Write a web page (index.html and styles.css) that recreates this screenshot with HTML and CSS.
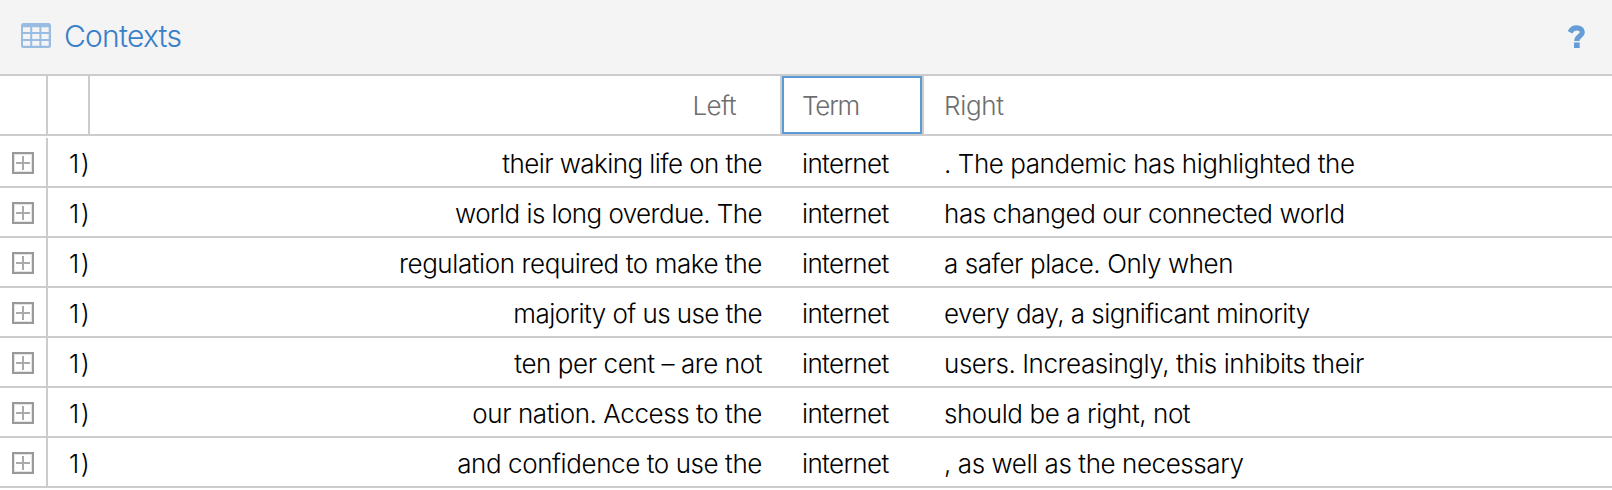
FILE: index.html
```html
<!DOCTYPE html>
<html lang="en">
<head>
<meta charset="utf-8">
<title>Contexts</title>
<link rel="stylesheet" href="styles.css">
</head>
<body>
<header class="toolbar">
  <svg class="table-icon" width="30" height="25" viewBox="0 0 30 25"><path fill="#98bce2" fill-rule="evenodd" d="M2.500 0h25Q30 0 30 2.500v20Q30 25 27.500 25h-25Q0 25 0 22.500v-20Q0 0 2.500 0zM2 4.300v4.600h7.200v-4.600zM11.200 4.300v4.600h7.200v-4.600zM20.400 4.300v4.600h7.300v-4.600zM2 11v5h7.200v-5zM11.200 11v5h7.200v-5zM20.400 11v5h7.300v-5zM2 18v4.700h7.200v-4.700zM11.200 18v4.700h7.200v-4.700zM20.400 18v4.700h7.300v-4.700z"/></svg>
  <h1 class="title"><span>Contexts</span></h1>
  <svg class="help" width="18" height="25" viewBox="0 0 18 25"><path fill="none" stroke="#679dd6" stroke-width="5.200" d="M2 7.300C3.500 4.200 5.500 2.800 8.600 2.800C12 2.800 14.300 4.500 14.300 7.300C14.300 11 8.800 11.300 8.800 16"/><path fill="#679dd6" d="M6 17.400h5.700v5.600H6z"/></svg>
</header>
<main class="grid">
  <div class="head">
    <div class="cell h-expand"></div>
    <div class="cell h-num"></div>
    <div class="cell h-left"><span>Left</span></div>
    <div class="cell h-term"><span>Term</span></div>
    <div class="cell h-right"><span>Right</span></div>
  </div>
  <div class="row first"><div class="expand"><i class="plus"></i></div><div class="num">1)</div><div class="left"><span>their waking life on the</span></div><div class="term"><span>internet</span></div><div class="right"><span>. The pandemic has highlighted the</span></div></div>
  <div class="row"><div class="expand"><i class="plus"></i></div><div class="num">1)</div><div class="left"><span>world is long overdue. The</span></div><div class="term"><span>internet</span></div><div class="right"><span>has changed our connected world</span></div></div>
  <div class="row"><div class="expand"><i class="plus"></i></div><div class="num">1)</div><div class="left loose"><span>regulation required to make the</span></div><div class="term"><span>internet</span></div><div class="right"><span>a safer place. Only when</span></div></div>
  <div class="row"><div class="expand"><i class="plus"></i></div><div class="num">1)</div><div class="left"><span>majority of us use the</span></div><div class="term"><span>internet</span></div><div class="right tight"><span>every day, a significant minority</span></div></div>
  <div class="row"><div class="expand"><i class="plus"></i></div><div class="num">1)</div><div class="left loose"><span>ten per cent – are not</span></div><div class="term"><span>internet</span></div><div class="right"><span>users. Increasingly, this inhibits their</span></div></div>
  <div class="row"><div class="expand"><i class="plus"></i></div><div class="num">1)</div><div class="left loose"><span>our nation. Access to the</span></div><div class="term"><span>internet</span></div><div class="right"><span>should be a right, not</span></div></div>
  <div class="row"><div class="expand"><i class="plus"></i></div><div class="num">1)</div><div class="left loose"><span>and confidence to use the</span></div><div class="term"><span>internet</span></div><div class="right"><span>, as well as the necessary</span></div></div>
</main>
</body>
</html>
```
FILE: styles.css
```css
* { box-sizing: border-box; }
body {
  margin: 0;
  height: 490px;
  overflow: hidden;
  background: #fff;
  color: #000;
  font: 300 26px/30px Inter, "Liberation Sans", sans-serif;
  letter-spacing: -0.3px;
  white-space: nowrap;
}
.toolbar {
  display: flex;
  align-items: flex-start;
  height: 76px;
  padding-left: 21px;
  padding-right: 26px;
  background: #f4f4f4;
  border-bottom: 2px solid #ccc;
}
.table-icon { margin-top: 23px; }
.title {
  flex: 1;
  margin: 18px 0 0 13px;
  font-size: 30px;
  line-height: 36px;
  font-weight: 300;
  letter-spacing: -0.75px;
  color: #3880c8;
}
.help { margin-top: 25px; }
.head {
  display: grid;
  grid-template-columns: 48px 42px 692px 142px 1fr;
  height: 60px;
  border-bottom: 2px solid #ccc;
  color: #6e6e6e;
}
.cell { border-right: 2px solid #ccc; padding-top: 15px; }
.h-left { text-align: right; padding-right: 44px; letter-spacing: -0.6px; }
.h-term { padding-left: 20px; letter-spacing: -1.2px; box-shadow: inset 0 0 0 2px #5b9bd5; }
.h-right { padding-left: 20px; border: 0; }
.row {
  display: grid;
  grid-template-columns: 48px 42px 692px 142px 1fr;
  height: 50px;
  padding-top: 0;
  border-bottom: 2px solid #ccc;
}
.row.first { height: 52px; padding-top: 2px; }
.row > div { padding-top: 11px; }
.row > .expand {
  padding: 14px 0 0 12px;
  border-right: 2px solid #ccc;
}
.plus {
  display: block;
  width: 22px;
  height: 22px;
  border: 2px solid #999;
  box-shadow: inset 0 0 0 1px #e4e4e4;
  background:
    linear-gradient(#aaa, #aaa) center / 14px 2px no-repeat,
    linear-gradient(#aaa, #aaa) center / 2px 14px no-repeat;
}
.num { padding-left: 21px; letter-spacing: 1.5px; }
.left { text-align: right; padding-right: 20px; letter-spacing: -0.57px; }
.left.loose { letter-spacing: -0.42px; }
.term { padding-left: 20px; letter-spacing: -0.65px; }
.right { padding-left: 20px; letter-spacing: -0.43px; }
.right.tight { letter-spacing: -0.53px; }
```
